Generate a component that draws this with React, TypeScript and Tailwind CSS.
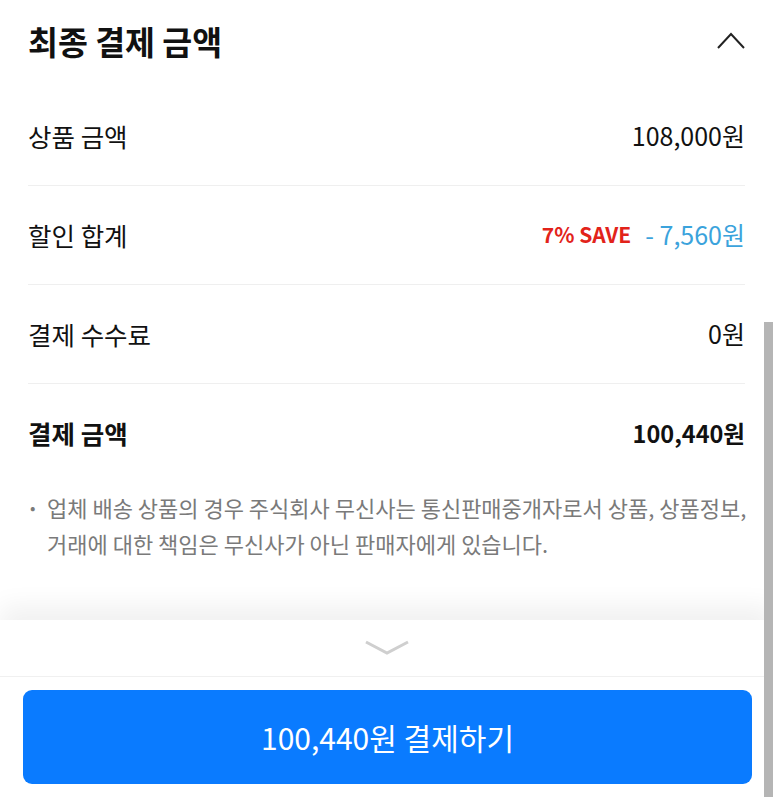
import React from "react";

const font = "font-['Noto_Sans_CJK_KR','Noto_Sans',sans-serif]";

function Row({ label, children, bold, last }: { label: string; children: React.ReactNode; bold?: boolean; last?: boolean }) {
  return (
    <div className={`flex items-center justify-between h-[99px] ${last ? "" : "border-b border-[#efefef]"}`}>
      <span className={`text-[25.5px] text-[#111] ${bold ? "font-bold" : ""}`}>{label}</span>
      <div className={`flex items-center text-[#111] ${bold ? "font-bold text-[23.5px]" : "text-[25px]"}`}>{children}</div>
    </div>
  );
}

export default function App() {
  return (
    <div className={`relative w-[773px] h-[797px] bg-white overflow-hidden flex flex-col ${font}`}>
      <div className="flex-1 px-[28px]">
        <div className="flex items-center justify-between h-[87px] pb-[4px]">
          <h1 className="text-[32.5px] font-bold text-[#111]">최종 결제 금액</h1>
          <svg width="30" height="20" viewBox="0 0 30 20" className="mr-[-1px] mb-[2px]">
            <polyline points="2,17 15,3 28,17" fill="none" stroke="#222" strokeWidth="2" />
          </svg>
        </div>
        <Row label="상품 금액">108,000원</Row>
        <Row label="할인 합계">
          <span className="text-[21px] font-bold text-[#e2231a] mr-[14px]">7% SAVE</span>
          <span className="text-[#3ba3dc] text-[25px]">- 7,560원</span>
        </Row>
        <Row label="결제 수수료">0원</Row>
        <Row label="결제 금액" bold last>100,440원</Row>
        <div className="flex text-[22px] leading-[36px] text-[#7a7a7a] mt-[6px]">
          <span className="w-[19px] shrink-0 text-[16px] pl-[2px]">•</span>
          <p className="whitespace-nowrap">
            업체 배송 상품의 경우 주식회사 무신사는 통신판매중개자로서 상품, 상품정보,
            <br />
            거래에 대한 책임은 무신사가 아닌 판매자에게 있습니다.
          </p>
        </div>
      </div>
      <div className="h-[177px] bg-white shadow-[0_-14px_24px_rgba(0,0,0,0.06)] flex flex-col">
        <div className="h-[57px] flex items-center justify-center border-b border-[#f0f0f0]">
          <svg width="46" height="18" viewBox="0 0 46 18">
            <polyline points="2,3 23,14 44,3" fill="none" stroke="#cfcfcf" strokeWidth="3" />
          </svg>
        </div>
        <div className="px-[23px] pt-[13px] pr-[21px]">
          <button className="w-full h-[94px] rounded-[9px] bg-[#0a7bff] text-white text-[30px]">
            100,440원 결제하기
          </button>
        </div>
      </div>
      <div className="absolute right-0 top-[322px] bottom-0 w-[9px] bg-[#b5b5b5]" />
    </div>
  );
}
